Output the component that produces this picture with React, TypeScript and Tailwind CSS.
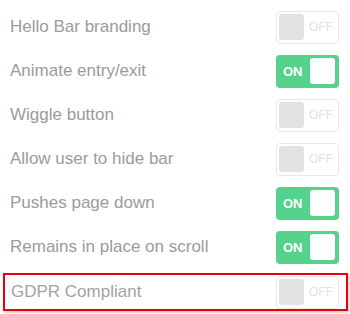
import React from "react";

interface IToggle {
  on: boolean;
}

const Toggle = ({ on }: IToggle) => {
  if (on) {
    return (
      <div className="flex items-center justify-between w-[63px] h-[33px] rounded-[4px] bg-[#55d28b] pl-[7px] pr-[4px]">
        <span className="text-[13px] font-bold text-white leading-none">ON</span>
        <div className="w-[25px] h-[26px] rounded-[3px] bg-white" />
      </div>
    );
  }
  return (
    <div className="flex items-center justify-between w-[63px] h-[33px] rounded-[4px] bg-white border border-[#e8e8e8] pl-[2px] pr-[5px]">
      <div className="w-[25px] h-[26px] rounded-[3px] bg-[#e3e3e3]" />
      <span className="text-[12px] text-[#e2e2e2] leading-none">OFF</span>
    </div>
  );
};

const rows = [
  { label: "Hello Bar branding", on: false },
  { label: "Animate entry/exit", on: true },
  { label: "Wiggle button", on: false },
  { label: "Allow user to hide bar", on: false },
  { label: "Pushes page down", on: true },
  { label: "Remains in place on scroll", on: true },
];

export default function App() {
  return (
    <div
      className="w-[350px] h-[314px] bg-white pt-[5px]"
      style={{ fontFamily: '"Liberation Sans", Arial, sans-serif' }}
    >
      {rows.map((row) => (
        <div
          key={row.label}
          className="flex items-center justify-between h-[44px] pl-[10px] pr-[11px]"
        >
          <span className="text-[17px] text-[#9b9b9b]">{row.label}</span>
          <Toggle on={row.on} />
        </div>
      ))}
      <div className="mt-[4px] ml-[3px] mr-[2px] h-[38px] border-2 border-[#e8000b] shadow-[1px_2px_2px_rgba(0,0,0,0.2)] flex items-center justify-between pl-[6px] pr-[7px]">
        <span className="text-[17px] text-[#a3a3a3]">GDPR Compliant</span>
        <Toggle on={false} />
      </div>
    </div>
  );
}
